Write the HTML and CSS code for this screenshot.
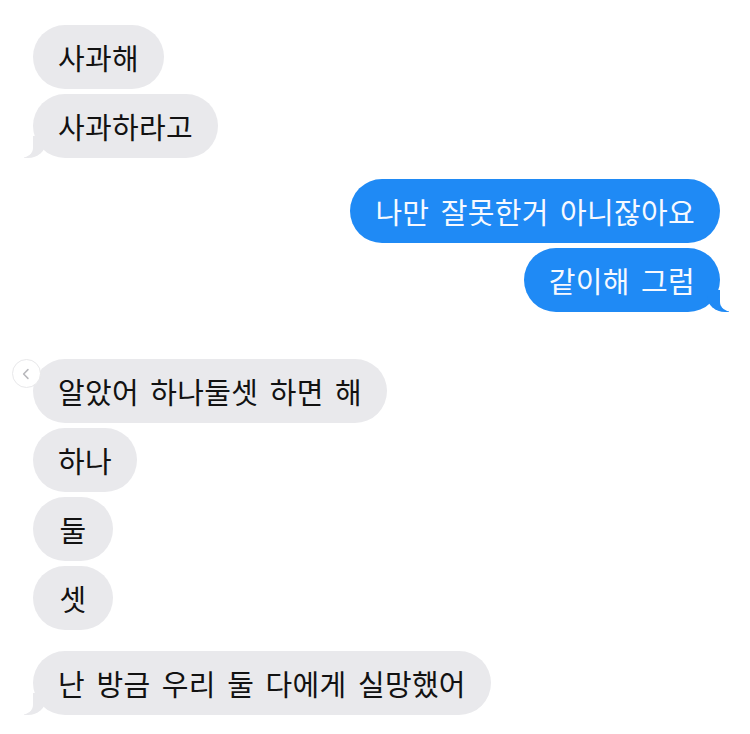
FILE: index.html
```html
<!DOCTYPE html>
<html lang="ko">
<head>
<meta charset="utf-8">
<link rel="stylesheet" href="styles.css">
</head>
<body>
<div class="chat">
  <div class="msg in first">사과해</div>
  <div class="msg in tail near">사과하라고</div>
  <div class="msg out mid">나만 잘못한거 아니잖아요</div>
  <div class="msg out tail near">같이해 그럼</div>
  <div class="msg in far has-back">알았어 하나둘셋 하면 해<span class="back"><svg viewBox="0 0 28 28" width="28" height="28"><path d="M15.5 9.5 L11 14 L15.5 18.5" fill="none" stroke="#b8b8bc" stroke-width="1.6" stroke-linecap="round" stroke-linejoin="round"/></svg></span></div>
  <div class="msg in near">하나</div>
  <div class="msg in near single">둘</div>
  <div class="msg in near single">셋</div>
  <div class="msg in tail mid">난 방금 우리 둘 다에게 실망했어</div>
</div>
</body>
</html>
```
FILE: styles.css
```css
html, body {
  margin: 0;
  padding: 0;
  background: #ffffff;
}
body {
  width: 750px;
  height: 734px;
  overflow: hidden;
  font-family: "Noto Sans CJK KR", "Noto Sans", sans-serif;
}
.chat {
  display: flex;
  flex-direction: column;
  padding: 25px 30px 0 33px;
}
.msg {
  position: relative;
  box-sizing: border-box;
  height: 64px;
  padding: 1px 25px 0;
  border-radius: 32px;
  font-size: 29px;
  line-height: 63px;
  white-space: nowrap;
  letter-spacing: 0.3px;
  word-spacing: 3px;
}
.msg.in {
  align-self: flex-start;
  background: #e9e9ec;
  color: #121212;
}
.msg.out {
  align-self: flex-end;
  background: #1f8af5;
  color: #f6f9ff;
}
.msg.single {
  min-width: 80px;
  text-align: center;
}
.first { margin-top: 0; }
.near { margin-top: 5px; }
.mid { margin-top: 21px; }
.far { margin-top: 47px; }

.tail::before,
.tail::after {
  content: "";
  position: absolute;
  bottom: 0;
  height: 22px;
}
.in.tail::before {
  left: -9px;
  width: 22px;
  background: #e9e9ec;
  border-bottom-right-radius: 18px 16px;
}
.in.tail::after {
  left: -26px;
  width: 26px;
  background: #ffffff;
  border-bottom-right-radius: 12px 10px;
}
.out.tail::before {
  right: -9px;
  width: 22px;
  background: #1f8af5;
  border-bottom-left-radius: 18px 16px;
}
.out.tail::after {
  right: -26px;
  width: 26px;
  background: #ffffff;
  border-bottom-left-radius: 12px 10px;
}
.back {
  position: absolute;
  left: -21px;
  top: 0;
  width: 29px;
  height: 29px;
  border-radius: 50%;
  background: #ffffff;
  border: 1px solid #e8e8ea;
  box-sizing: border-box;
  display: flex;
  align-items: center;
  justify-content: center;
  line-height: 0;
}
.back svg {
  display: block;
}
```
